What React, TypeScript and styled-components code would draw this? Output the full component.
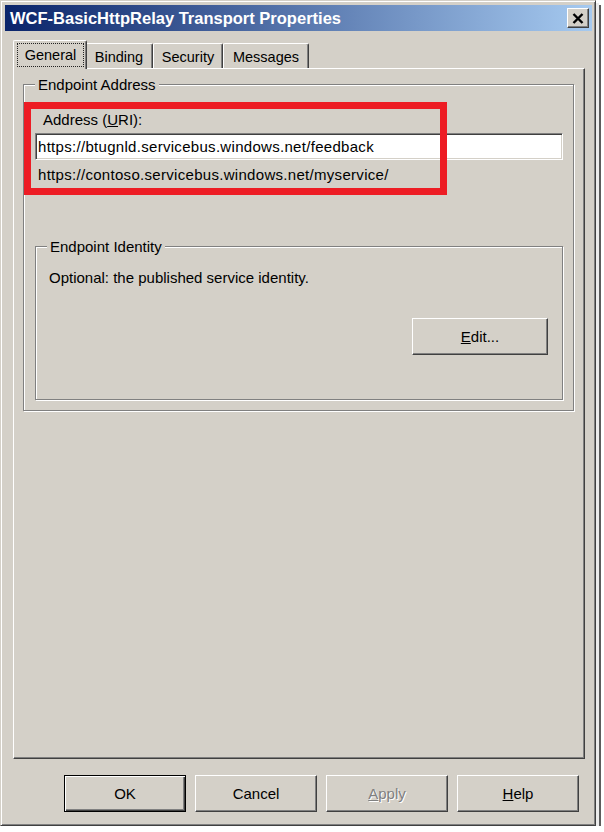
import React from "react";
import styled, { createGlobalStyle, css } from "styled-components";

const face = "#d4d0c8";
const shadow = "#808080";
const darkShadow = "#404040";
const highlight = "#ffffff";

const GlobalStyle = createGlobalStyle`
  html, body {
    margin: 0;
    padding: 0;
    background: #ffffff;
  }
  body {
    font-family: "Liberation Sans", Arial, sans-serif;
    font-size: 15px;
    color: #000;
  }
  * {
    box-sizing: border-box;
  }
`;

const raised = css`
  border: 1px solid;
  border-color: ${highlight} ${darkShadow} ${darkShadow} ${highlight};
  box-shadow:
    inset -1px -1px 0 ${shadow},
    inset 1px 1px 0 ${face};
`;

const Window = styled.div`
  width: 596px;
  height: 826px;
  display: flex;
  flex-direction: column;
  padding: 4px 3px 4px 4px;
  background: ${face};
  border: 1px solid;
  border-color: ${face} ${darkShadow} ${darkShadow} ${face};
  box-shadow:
    inset 1px 1px 0 ${highlight},
    inset -1px -1px 0 ${shadow},
    3px 3px 0 #ececec,
    5px 5px 0 #5c5c5c;
`;

const TitleBar = styled.div`
  height: 26px;
  flex-shrink: 0;
  display: flex;
  align-items: center;
  justify-content: space-between;
  padding: 0 3px 0 5px;
  background: linear-gradient(to right, #0a246a, #a6caf0);
`;

const Title = styled.span`
  color: #ffffff;
  font-weight: bold;
  font-size: 16.5px;
  white-space: nowrap;
`;

const CloseButton = styled.button`
  ${raised}
  width: 22px;
  height: 20px;
  padding: 0;
  background: ${face};
  display: flex;
  align-items: center;
  justify-content: center;
`;

const Body = styled.div`
  flex: 1;
  display: flex;
  flex-direction: column;
  padding: 9px 7px 0 8px;
`;

const TabRow = styled.div`
  height: 28px;
  flex-shrink: 0;
  display: flex;
  align-items: flex-end;
  padding-left: 2px;
`;

const Tab = styled.div<{ $active?: boolean; $width: number }>`
  position: relative;
  width: ${(p) => p.$width + (p.$active ? 4 : 0)}px;
  height: ${(p) => (p.$active ? 29 : 25)}px;
  margin: ${(p) => (p.$active ? "0 -2px -1px" : "0")};
  z-index: ${(p) => (p.$active ? 2 : 1)};
  display: flex;
  align-items: stretch;
  justify-content: center;
  font-size: 14.5px;
  background: ${face};
  border-top: 1px solid ${highlight};
  border-left: 1px solid ${highlight};
  border-right: 1px solid ${darkShadow};
  border-radius: 2px 2px 0 0;
  box-shadow: inset -1px 0 0 ${shadow};
`;

const TabLabel = styled.span<{ $focused?: boolean }>`
  flex: 1;
  display: flex;
  align-items: center;
  justify-content: center;
  padding-top: 1px;
  ${(p) =>
    p.$focused &&
    css`
      margin: 2px 2px 2px 3px;
      padding-top: 0;
      border: 1px dotted #222;
    `}
`;

const Panel = styled.div`
  flex: 1;
  display: flex;
  flex-direction: column;
  padding: 7px 10px 0 9px;
  border: 1px solid;
  border-color: ${highlight} ${darkShadow} ${darkShadow} ${highlight};
  box-shadow: inset -1px -1px 0 ${shadow};
`;

const GroupBox = styled.fieldset<{ $padBottom?: number }>`
  margin: 0;
  min-width: 0;
  display: flex;
  flex-direction: column;
  padding: 0 10px ${(p) => p.$padBottom ?? 10}px 11px;
  border: 1px solid ${shadow};
  box-shadow:
    inset 1px 1px 0 ${highlight},
    1px 1px 0 ${highlight};
`;

const Legend = styled.legend`
  padding: 0 3px;
  line-height: 17px;
  background: ${face};
`;

const HighlightArea = styled.div`
  position: relative;
  display: flex;
  flex-direction: column;
  margin-top: 18px;
`;

// red annotation drawn over the address fields
const RedFrame = styled.div`
  position: absolute;
  left: -11px;
  top: -9px;
  width: 423px;
  height: 93px;
  border: 7px solid #ed1c24;
  pointer-events: none;
`;

const FieldLabel = styled.label`
  line-height: 18px;
  padding-left: 8px;
`;

const TextInput = styled.input`
  margin-top: 4px;
  height: 27px;
  width: 100%;
  padding: 0 2px;
  font: inherit;
  letter-spacing: 0.3px;
  color: #000;
  background: #ffffff;
  border: 1px solid;
  border-color: ${shadow} ${highlight} ${highlight} ${shadow};
  box-shadow:
    inset 1px 1px 0 ${darkShadow},
    inset -1px -1px 0 ${face};
  outline: none;
`;

const UrlText = styled.div`
  margin-top: 6px;
  line-height: 18px;
  padding-left: 3px;
  letter-spacing: 0.3px;
`;

const IdentityGroup = styled(GroupBox)`
  margin-top: 54px;
`;

const Description = styled.div`
  margin-top: 14px;
  line-height: 18px;
  padding-left: 2px;
`;

const EditRow = styled.div`
  margin-top: 31px;
  padding-right: 4px;
  display: flex;
  justify-content: flex-end;
`;

const PushButton = styled.button<{ $default?: boolean; $width?: number }>`
  ${raised}
  width: ${(p) => p.$width ?? 122}px;
  height: 37px;
  padding: 0;
  font: inherit;
  font-size: 15px;
  color: #000;
  background: ${face};

  ${(p) =>
    p.$default &&
    css`
      border-color: #000;
      box-shadow:
        inset 1px 1px 0 ${highlight},
        inset -1px -1px 0 ${darkShadow},
        inset -2px -2px 0 ${shadow};
    `}

  &:disabled {
    color: ${shadow};
    text-shadow: 1px 1px 0 ${highlight};
  }
`;

const Footer = styled.div`
  height: 62px;
  flex-shrink: 0;
  display: flex;
  justify-content: flex-end;
  align-items: flex-start;
  gap: 9px;
  padding: 16px 13px 0 0;
`;

const tabs = [
  { label: "General", width: 70 },
  { label: "Binding", width: 68 },
  { label: "Security", width: 70 },
  { label: "Messages", width: 86 },
];

export default function App() {
  return (
    <>
      <GlobalStyle />
      <Window>
        <TitleBar>
          <Title>WCF-BasicHttpRelay Transport Properties</Title>
          <CloseButton aria-label="Close">
            <svg width="12" height="11" viewBox="0 0 12 11">
              <path
                d="M1.5 1 L10.5 10 M10.5 1 L1.5 10"
                stroke="#000"
                strokeWidth="2.4"
                fill="none"
              />
            </svg>
          </CloseButton>
        </TitleBar>

        <Body>
          <TabRow>
            {tabs.map((t, i) => (
              <Tab key={t.label} $active={i === 0} $width={t.width}>
                <TabLabel $focused={i === 0}>{t.label}</TabLabel>
              </Tab>
            ))}
          </TabRow>

          <Panel>
            <GroupBox>
              <Legend>Endpoint Address</Legend>
              <HighlightArea>
                <FieldLabel>
                  Address (<u>U</u>RI):
                </FieldLabel>
                <TextInput
                  readOnly
                  value="https://btugnld.servicebus.windows.net/feedback"
                />
                <UrlText>https://contoso.servicebus.windows.net/myservice/</UrlText>
                <RedFrame />
              </HighlightArea>

              <IdentityGroup $padBottom={44}>
                <Legend>Endpoint Identity</Legend>
                <Description>Optional: the published service identity.</Description>
                <EditRow>
                  <PushButton $width={136}>
                    <u>E</u>dit...
                  </PushButton>
                </EditRow>
              </IdentityGroup>
            </GroupBox>
          </Panel>
        </Body>

        <Footer>
          <PushButton $default>OK</PushButton>
          <PushButton>Cancel</PushButton>
          <PushButton disabled>
            <u>A</u>pply
          </PushButton>
          <PushButton>
            <u>H</u>elp
          </PushButton>
        </Footer>
      </Window>
    </>
  );
}
